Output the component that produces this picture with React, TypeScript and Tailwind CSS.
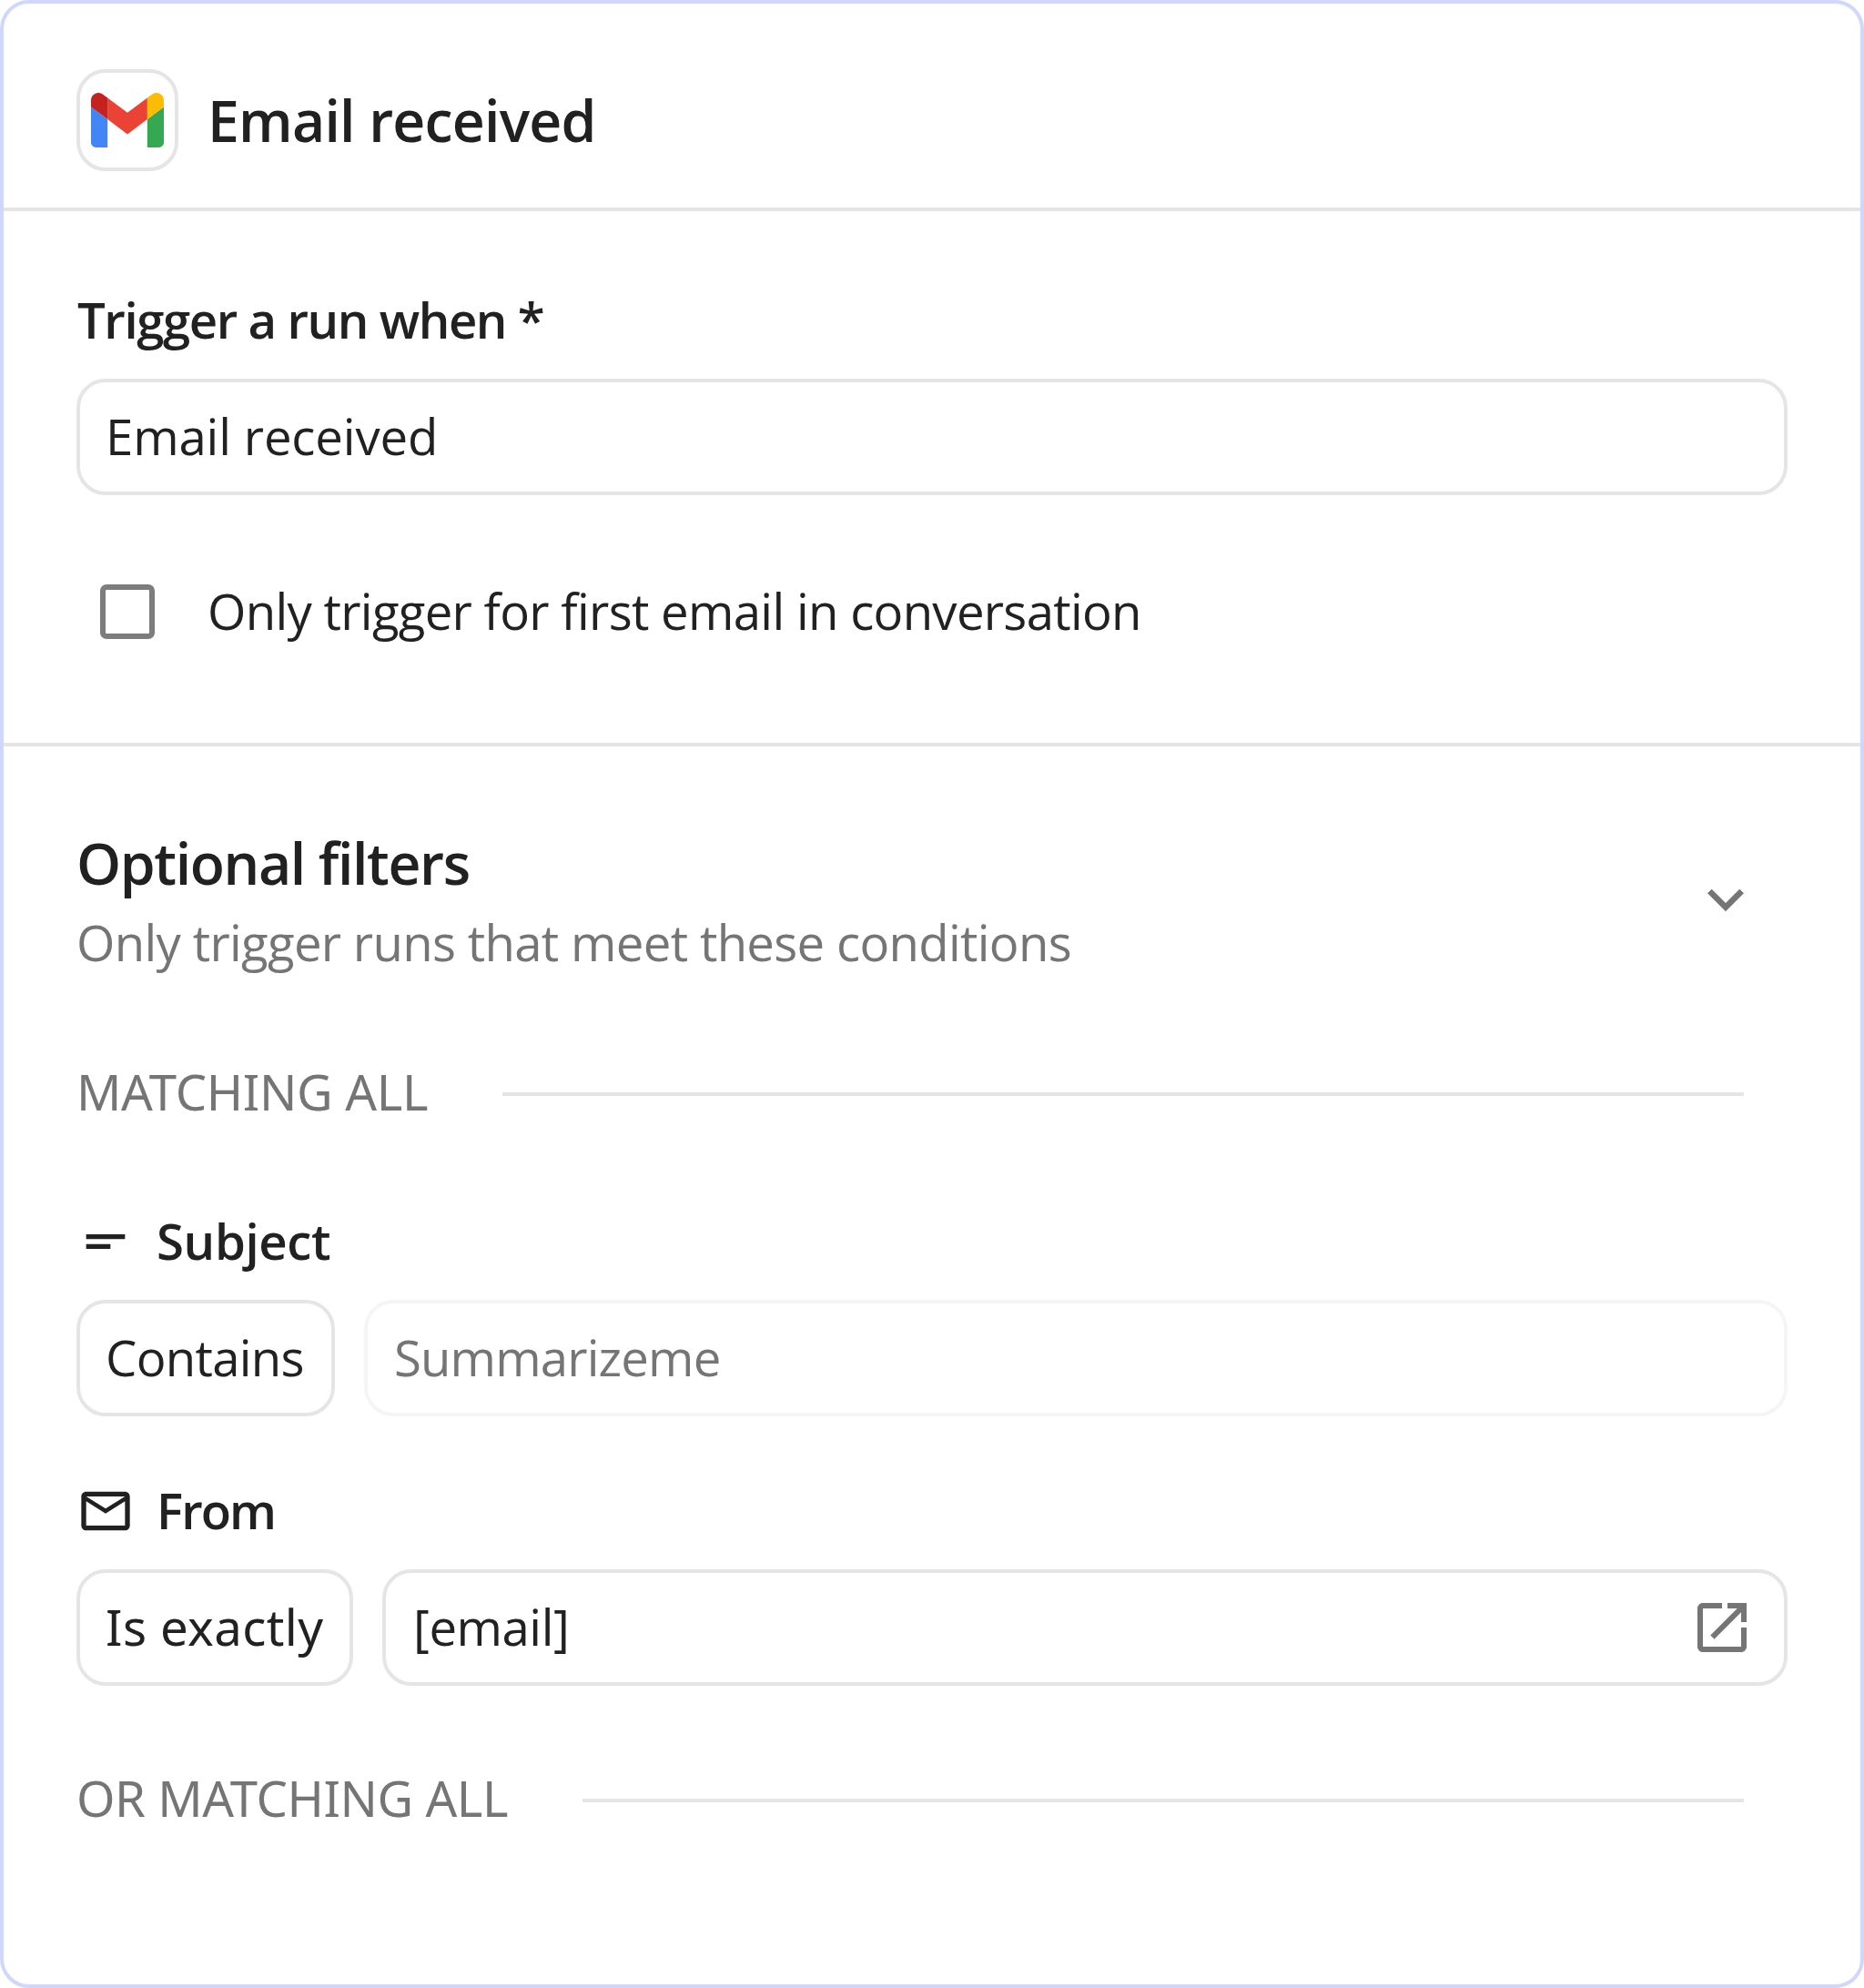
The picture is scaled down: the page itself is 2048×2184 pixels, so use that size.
import React from "react";

function GmailLogo() {
  return (
    <svg viewBox="52 42 88 66" className="h-[60px] w-20">
      <path fill="#4285f4" d="M58 108h14V74L52 59v43c0 3.32 2.69 6 6 6" />
      <path fill="#34a853" d="M120 108h14c3.32 0 6-2.69 6-6V59l-20 15" />
      <path fill="#fbbc04" d="M120 48v26l20-15v-8c0-7.42-8.47-11.65-14.4-7.2" />
      <path fill="#ea4335" d="M72 74V48l24 18 24-18v26L96 92" />
      <path fill="#c5221f" d="M52 51v8l20 15V48l-5.6-4.2c-5.94-4.45-14.4-.22-14.4 7.2" />
    </svg>
  );
}

function Icon({ d, className }: { d: string; className: string }) {
  return (
    <svg viewBox="0 0 24 24" fill="currentColor" className={`shrink-0 ${className}`}>
      <path d={d} />
    </svg>
  );
}

const icons = {
  chevron: "M16.59 8.59L12 13.17 7.41 8.59 6 10l6 6 6-6z",
  shortText: "M4 9h16v2H4zm0 4h10v2H4z",
  mail: "M22 6c0-1.1-.9-2-2-2H4c-1.1 0-2 .9-2 2v12c0 1.1.9 2 2 2h16c1.1 0 2-.9 2-2V6zm-2 0l-8 5-8-5h16zm0 12H4V8l8 5 8-5v10z",
  launch:
    "M19 19H5V5h7V3H5c-1.11 0-2 .9-2 2v14c0 1.1.89 2 2 2h14c1.1 0 2-.9 2-2v-7h-2v7zM14 3v2h3.59l-9.83 9.83 1.41 1.41L19 6.41V10h2V3h-7z",
};

const field =
  "flex h-32 items-center whitespace-nowrap rounded-[32px] border-4 pb-0.5 text-[54.5px] leading-[80px]";

export default function App() {
  return (
    <div className="h-[2184px] w-[2048px] bg-white font-['Open_Sans',sans-serif] text-[#212121]">
      <div className="flex h-full flex-col rounded-[32px] border-4 border-[#d0d7ff] bg-white">
        <header className="flex h-[228px] items-start gap-8 border-b-4 border-[#e5e5e5] pl-20 pt-[72px]">
          <div className="flex size-28 items-center justify-center rounded-[32px] border-4 border-[#e5e5e5] bg-white">
            <GmailLogo />
          </div>
          <h1 className="mt-2 text-[62.5px] font-semibold leading-[95px] tracking-[-0.78px]">Email received</h1>
        </header>

        <section className="flex h-[588px] flex-col border-b-4 border-[#e5e5e5] px-20 pt-[79px]">
          <label className="pl-px text-[54.5px] font-semibold leading-[80px] tracking-[-1.43px]">
            Trigger a run when *
          </label>
          <div className={`${field} mt-[25px] border-[#e5e5e5] pl-7 tracking-[-0.15px]`}>Email received</div>
          <div className="mt-[87px] flex items-start pl-[26px]">
            <div className="mt-[11px] size-[60px] shrink-0 rounded-[7px] border-[6.67px] border-[#7d7d7d] bg-white" />
            <span className="ml-[58px] whitespace-nowrap text-[54.5px] leading-[80px] tracking-[-0.7px]">
              Only trigger for first email in conversation
            </span>
          </div>
        </section>

        <section className="flex flex-col px-20 pt-20">
          <div className="flex items-center justify-between pr-7">
            <div>
              <h2 className="text-[62.5px] font-semibold leading-[95px] tracking-[-1.37px]">Optional filters</h2>
              <p className="whitespace-nowrap text-[54.5px] leading-[80px] tracking-[-0.68px] text-[#757575]">
                Only trigger runs that meet these conditions
              </p>
            </div>
            <Icon d={icons.chevron} className="size-20 text-[#757575]" />
          </div>

          <div className="mt-[84px] flex items-start justify-between pr-12">
            <span className="whitespace-nowrap font-['Noto_Sans',sans-serif] text-[54.5px] leading-[80px] tracking-[-0.33px] text-[#757575]">
              MATCHING ALL
            </span>
            <div className="mt-[41px] h-1 w-[1364px] bg-[#e5e5e5]" />
          </div>

          <div className="mt-[84px] flex gap-6">
            <Icon d={icons.shortText} className="mt-[9px] size-16" />
            <span className="text-[54.5px] font-semibold leading-[80px] tracking-[-0.35px]">Subject</span>
          </div>
          <div className="mt-[25px] flex gap-8">
            <div className={`${field} w-[284px] border-[#e5e5e5] pl-7 tracking-[-0.7px]`}>Contains</div>
            <div className={`${field} flex-1 border-[#f5f5f5] pl-[29px] tracking-[-0.85px] text-[#757575]`}>
              Summarizeme
            </div>
          </div>

          <div className="mt-[63px] flex gap-6">
            <Icon d={icons.mail} className="mt-[9px] size-16" />
            <span className="text-[54.5px] font-semibold leading-[80px] tracking-[-1.9px]">From</span>
          </div>
          <div className="mt-[25px] flex gap-8">
            <div
              className={`${field} w-[304px] border-[#e5e5e5] pl-7 font-['Noto_Sans',sans-serif] tracking-[0.4px]`}
            >
              Is exactly
            </div>
            <div className={`${field} flex-1 justify-between border-[#e5e5e5] pl-[30px] pr-8 tracking-[-0.45px]`}>
              [email]
              <Icon d={icons.launch} className="mt-0.5 size-[72px] text-[#757575]" />
            </div>
          </div>

          <div className="mt-[83px] flex items-start justify-between pr-12">
            <span className="whitespace-nowrap font-['Noto_Sans',sans-serif] text-[54.5px] leading-[80px] tracking-[-0.45px] text-[#757575]">
              OR MATCHING ALL
            </span>
            <div className="mt-[41px] h-1 w-[1276px] bg-[#e5e5e5]" />
          </div>
        </section>
      </div>
    </div>
  );
}
